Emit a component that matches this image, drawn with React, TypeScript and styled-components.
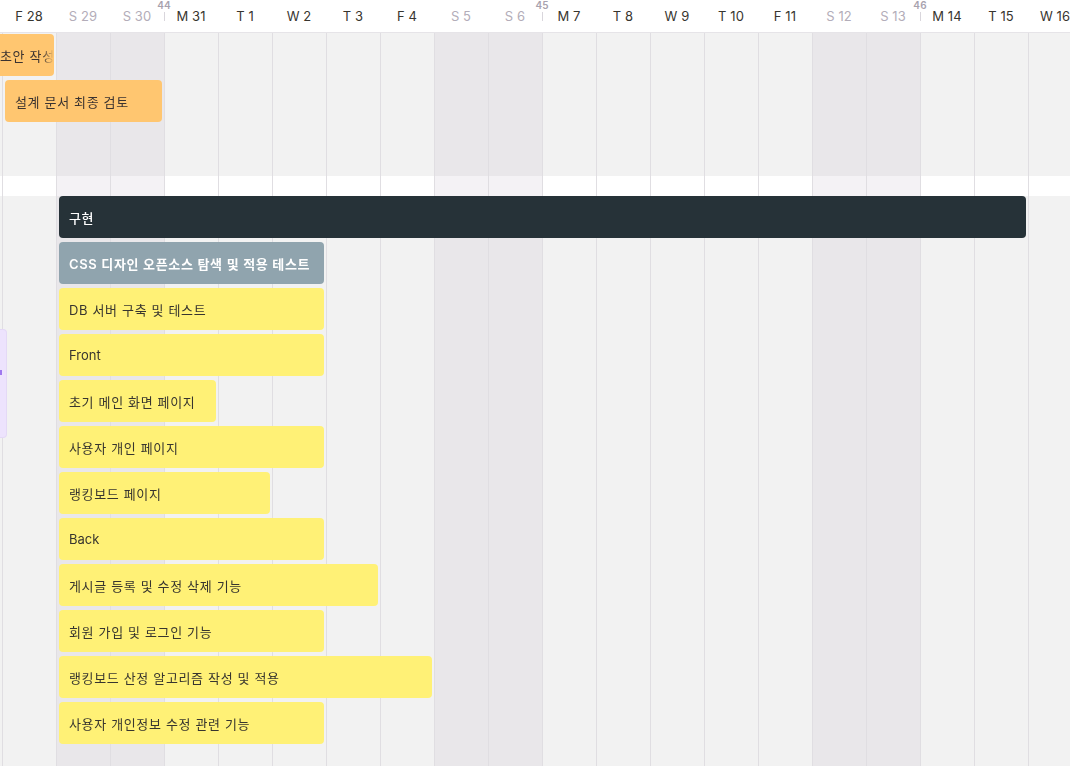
import React from 'react';
import styled, { createGlobalStyle, css } from 'styled-components';

const COL = 54;

type Day = { id: string; label: string; weekend?: boolean; week?: number };

const days: Day[] = [
  { id: 'd27', label: '' },
  { id: 'd28', label: 'F 28' },
  { id: 'd29', label: 'S 29', weekend: true },
  { id: 'd30', label: 'S 30', weekend: true },
  { id: 'd31', label: 'M 31', week: 44 },
  { id: 'd1', label: 'T 1' },
  { id: 'd2', label: 'W 2' },
  { id: 'd3', label: 'T 3' },
  { id: 'd4', label: 'F 4' },
  { id: 'd5', label: 'S 5', weekend: true },
  { id: 'd6', label: 'S 6', weekend: true },
  { id: 'd7', label: 'M 7', week: 45 },
  { id: 'd8', label: 'T 8' },
  { id: 'd9', label: 'W 9' },
  { id: 'd10', label: 'T 10' },
  { id: 'd11', label: 'F 11' },
  { id: 'd12', label: 'S 12', weekend: true },
  { id: 'd13', label: 'S 13', weekend: true },
  { id: 'd14', label: 'M 14', week: 46 },
  { id: 'd15', label: 'T 15' },
  { id: 'd16', label: 'W 16' },
];

type Tone = 'orange' | 'dark' | 'slate' | 'yellow';

type Task = { title: string; row: number; start: number; end: number; tone: Tone; indent?: number };

// row numbers are grid row tracks: 2..4 = first group, 7.. = second group
const tasks: Task[] = [
  { title: '초안 작성', row: 2, start: 0, end: 1, tone: 'orange', indent: 49 },
  { title: '설계 문서 최종 검토', row: 3, start: 1, end: 3, tone: 'orange' },
  { title: '구현', row: 7, start: 2, end: 19, tone: 'dark' },
  { title: 'CSS 디자인 오픈소스 탐색 및 적용 테스트', row: 8, start: 2, end: 6, tone: 'slate' },
  { title: 'DB 서버 구축 및 테스트', row: 9, start: 2, end: 6, tone: 'yellow' },
  { title: 'Front', row: 10, start: 2, end: 6, tone: 'yellow' },
  { title: '초기 메인 화면 페이지', row: 11, start: 2, end: 4, tone: 'yellow' },
  { title: '사용자 개인 페이지', row: 12, start: 2, end: 6, tone: 'yellow' },
  { title: '랭킹보드 페이지', row: 13, start: 2, end: 5, tone: 'yellow' },
  { title: 'Back', row: 14, start: 2, end: 6, tone: 'yellow' },
  { title: '게시글 등록 및 수정 삭제 기능', row: 15, start: 2, end: 7, tone: 'yellow' },
  { title: '회원 가입 및 로그인 기능', row: 16, start: 2, end: 6, tone: 'yellow' },
  { title: '랭킹보드 산정 알고리즘 작성 및 적용', row: 17, start: 2, end: 8, tone: 'yellow' },
  { title: '사용자 개인정보 수정 관련 기능', row: 18, start: 2, end: 6, tone: 'yellow' },
];

const hasHangul = (s: string) => /[\uac00-\ud7a3]/.test(s);

const GlobalStyle = createGlobalStyle`
  html, body {
    margin: 0;
    padding: 0;
    background: #ffffff;
    overflow: hidden;
  }
  body {
    font-family: Inter, "Noto Sans CJK KR", "Noto Sans", sans-serif;
    color: #37352f;
    -webkit-font-smoothing: antialiased;
  }
  * { box-sizing: border-box; }
`;

const Viewport = styled.div`
  width: 100vw;
  height: 100vh;
  overflow: hidden;
  display: flex;
  flex-direction: column;
  background: #ffffff;
`;

const HeaderBar = styled.div`
  flex: none;
  height: 33px;
  border-bottom: 1px solid #e6e4e8;
  background: #ffffff;
  overflow: hidden;
`;

const HeaderGrid = styled.div`
  display: grid;
  grid-template-columns: repeat(${days.length}, ${COL}px);
  height: 32px;
  margin-left: -52px;
`;

const DayCell = styled.div<{ $weekend?: boolean }>`
  position: relative;
  display: flex;
  align-items: center;
  justify-content: center;
  font-size: 13px;
  font-weight: 400;
  letter-spacing: 0.1px;
  white-space: nowrap;
  color: ${(p) => (p.$weekend ? '#b3adb9' : '#37352f')};
`;

const WeekNum = styled.span`
  position: absolute;
  left: 0;
  top: 0;
  transform: translateX(-50%);
  font-size: 10px;
  line-height: 10px;
  font-weight: 600;
  color: #a8a2ae;
`;

const WeekTick = styled.span`
  position: absolute;
  left: 0;
  top: 12px;
  width: 1px;
  height: 9px;
  background: #d9d6dc;
`;

const Body = styled.div`
  flex: 1;
  overflow: hidden;
`;

const Canvas = styled.div`
  position: relative;
  display: grid;
  grid-template-columns: repeat(${days.length}, ${COL}px);
  grid-template-rows: 1px repeat(3, 46px) 4px 20px repeat(13, 46px);
  margin-left: -52px;
`;

const GroupBg = styled.div<{ $from: number; $to: number }>`
  grid-column: 1 / -1;
  grid-row: ${(p) => `${p.$from} / ${p.$to}`};
  background: #f2f2f2;
`;

const DayColumn = styled.div<{ $index: number; $weekend?: boolean }>`
  grid-column: ${(p) => p.$index + 1};
  grid-row: 1 / -1;
  border-left: 1px solid #e0dee2;
  background: ${(p) => (p.$weekend ? 'rgba(184, 177, 190, 0.16)' : 'transparent')};
`;

const toneStyles: Record<Tone, ReturnType<typeof css>> = {
  orange: css`
    background: #ffc670;
    color: #3b3330;
    font-weight: 400;
  `,
  dark: css`
    background: #263238;
    color: #ffffff;
    font-weight: 500;
  `,
  slate: css`
    background: #90a4ae;
    color: #ffffff;
    font-weight: 600;
  `,
  yellow: css`
    background: #fff176;
    color: #37352f;
    font-weight: 400;
  `,
};

const Bar = styled.div<{ $row: number; $start: number; $end: number; $tone: Tone; $indent?: number }>`
  grid-row: ${(p) => p.$row};
  grid-column: ${(p) => `${p.$start + 1} / ${p.$end + 2}`};
  align-self: start;
  height: 42px;
  margin: 0 2px 0 3px;
  padding-left: ${(p) => p.$indent ?? 10}px;
  border-radius: 4px;
  display: flex;
  align-items: center;
  min-width: 0;
  overflow: hidden;
  font-size: 13px;
  z-index: 1;
  ${(p) => toneStyles[p.$tone]}
`;

const BarLabel = styled.span<{ $wide?: boolean }>`
  flex: 1;
  min-width: 0;
  white-space: nowrap;
  overflow: hidden;
  letter-spacing: ${(p) => (p.$wide ? '0.65px' : '0')};
  -webkit-mask-image: linear-gradient(to right, #000 calc(100% - 12px), transparent);
  mask-image: linear-gradient(to right, #000 calc(100% - 12px), transparent);
`;

const Peek = styled.div`
  position: absolute;
  left: 52px;
  top: 296px;
  width: 7px;
  height: 109px;
  border-radius: 0 4px 4px 0;
  background: #ede3fd;
  border: 1px solid #e4d9f6;
  border-left: none;
  z-index: 2;
`;

const PeekMark = styled.span`
  position: absolute;
  left: 0;
  top: 40px;
  width: 2px;
  height: 5px;
  background: #9f78ee;
`;

export default function App() {
  return (
    <Viewport>
      <GlobalStyle />
      <HeaderBar>
        <HeaderGrid>
          {days.map((d) => (
            <DayCell key={d.id} $weekend={d.weekend}>
              {d.week !== undefined && (
                <>
                  <WeekNum>{d.week}</WeekNum>
                  <WeekTick />
                </>
              )}
              {d.label}
            </DayCell>
          ))}
        </HeaderGrid>
      </HeaderBar>
      <Body>
        <Canvas>
          <GroupBg $from={1} $to={6} />
          <GroupBg $from={7} $to={-1} />
          {days.map((d, i) => (
            <DayColumn key={d.id} $index={i} $weekend={d.weekend} />
          ))}
          {tasks.map((t) => (
            <Bar key={t.title} $row={t.row} $start={t.start} $end={t.end} $tone={t.tone} $indent={t.indent}>
              <BarLabel $wide={hasHangul(t.title)}>{t.title}</BarLabel>
            </Bar>
          ))}
          <Peek>
            <PeekMark />
          </Peek>
        </Canvas>
      </Body>
    </Viewport>
  );
}
